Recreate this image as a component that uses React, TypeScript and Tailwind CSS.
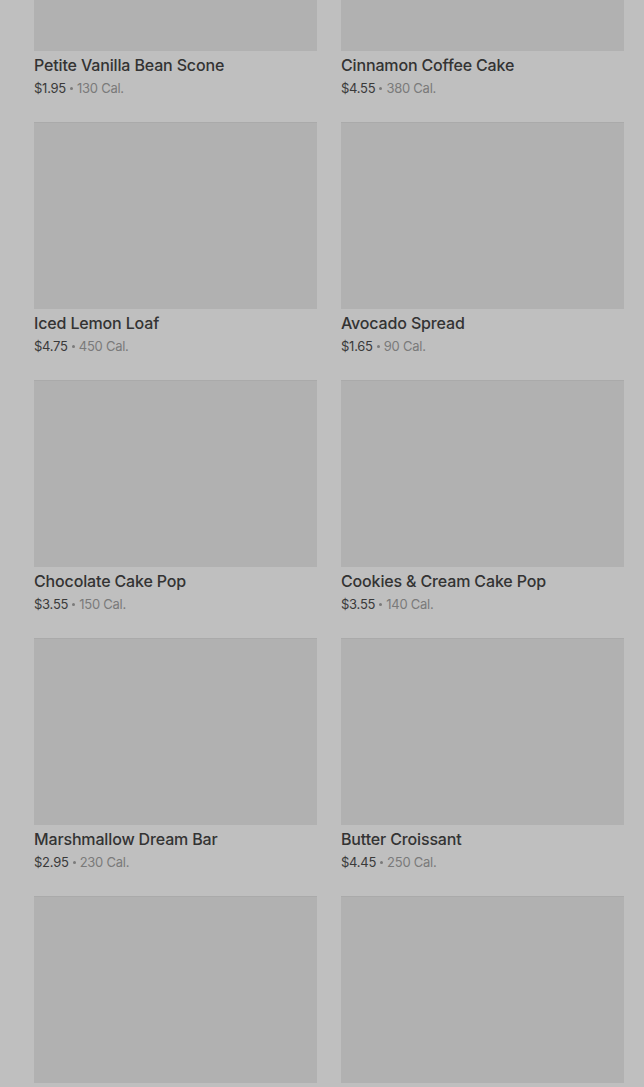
const items = [
  { name: 'Petite Vanilla Bean Scone', price: '$1.95', cal: '130 Cal.' },
  { name: 'Cinnamon Coffee Cake', price: '$4.55', cal: '380 Cal.' },
  { name: 'Iced Lemon Loaf', price: '$4.75', cal: '450 Cal.' },
  { name: 'Avocado Spread', price: '$1.65', cal: '90 Cal.' },
  { name: 'Chocolate Cake Pop', price: '$3.55', cal: '150 Cal.' },
  { name: 'Cookies & Cream Cake Pop', price: '$3.55', cal: '140 Cal.' },
  { name: 'Marshmallow Dream Bar', price: '$2.95', cal: '230 Cal.' },
  { name: 'Butter Croissant', price: '$4.45', cal: '250 Cal.' },
  { name: 'Chocolate Croissant', price: '$4.25', cal: '300 Cal.' },
  { name: 'Ham & Swiss Croissant', price: '$5.25', cal: '320 Cal.' },
]

function ProductCard({ name, price, cal }: { name: string; price: string; cal: string }) {
  return (
    <div className="flex flex-col">
      {/* Image placeholder */}
      <div className="h-[187px] bg-[#b1b1b1] border-t border-[#aaaaaa]" />
      <div className="mt-1 h-5 text-[16px] leading-5 font-medium text-[#333333] tracking-[-0.15px]">{name}</div>
      <div className="mt-[3px] h-5 flex items-center text-[13px] leading-5 text-[#3a3a3a] tracking-[-0.25px]">
        <span>{price}</span>
        <span className="mx-[4px] w-[3px] h-[3px] rounded-full bg-[#7a7a7a]" />
        <span className="text-[#7a7a7a]">{cal}</span>
      </div>
    </div>
  )
}

export default function App() {
  return (
    <div
      className="h-[1087px] overflow-hidden bg-[#bfbfbf]"
      style={{ fontFamily: 'Inter, "Open Sans", sans-serif' }}
    >
      <div className="-mt-[136px] grid grid-cols-2 gap-x-6 gap-y-6 pl-[34px] pr-5">
        {items.map((item) => (
          <ProductCard key={item.name} {...item} />
        ))}
      </div>
    </div>
  )
}
